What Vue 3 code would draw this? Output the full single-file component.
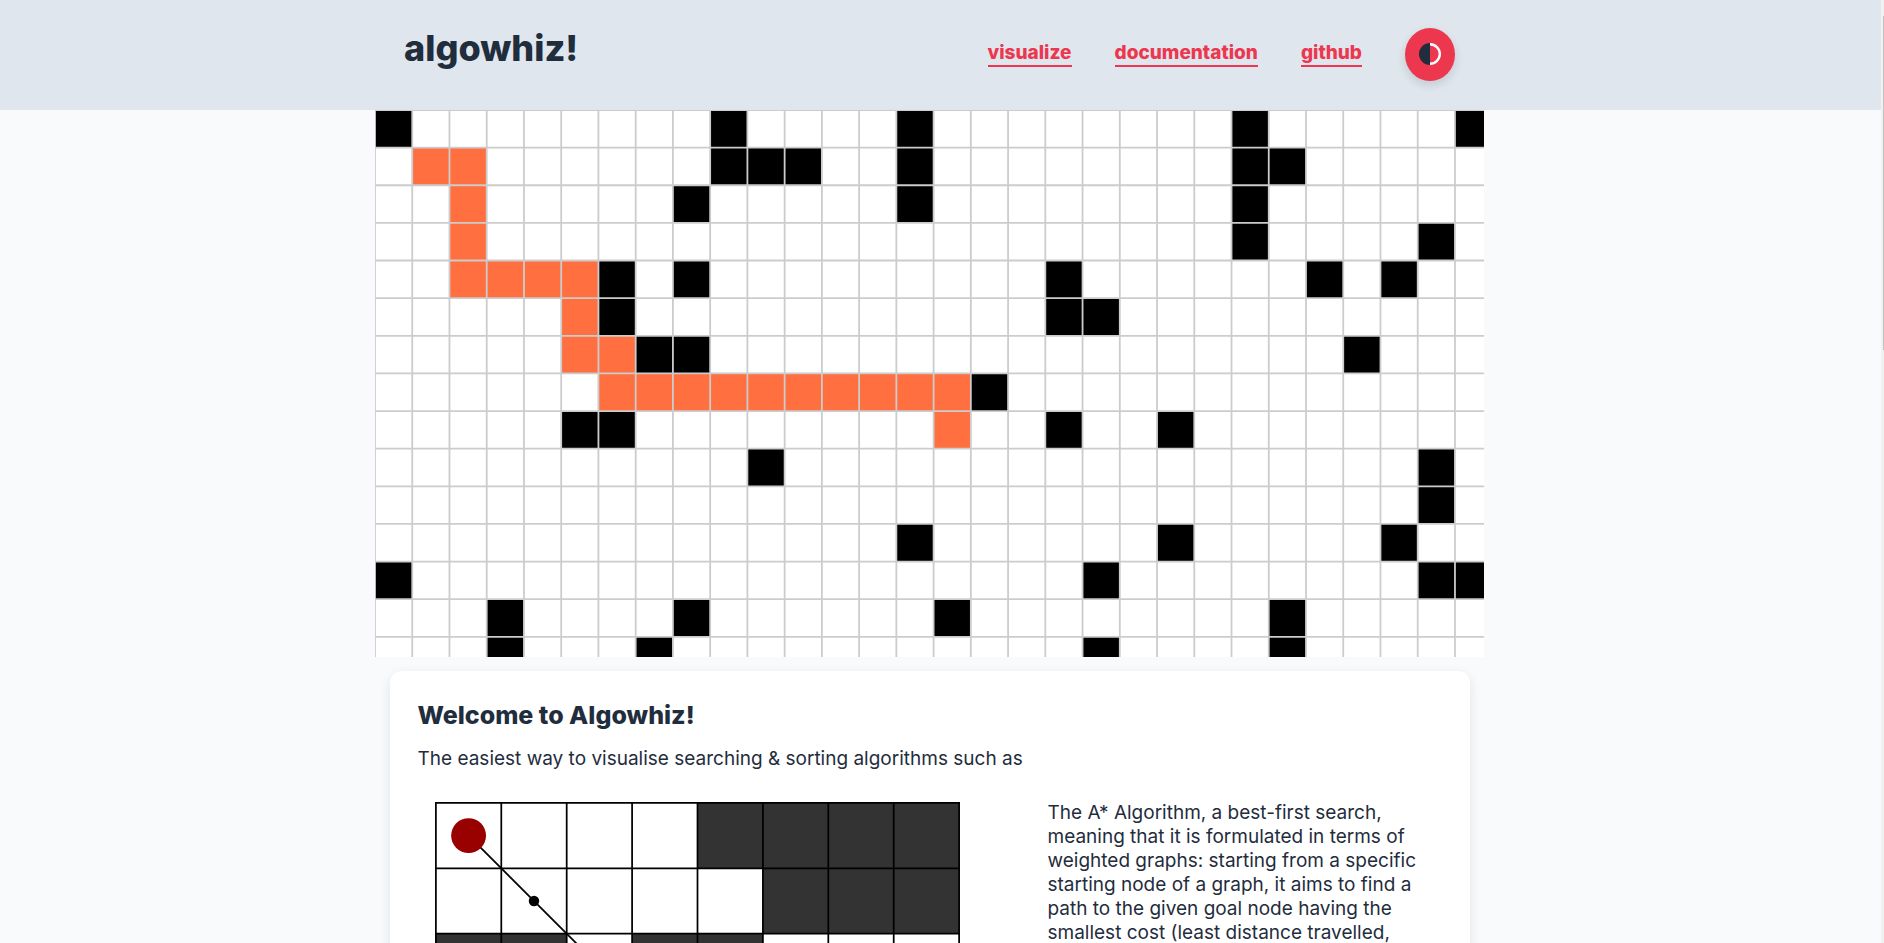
<script setup>
const COL = 37.24
const ROW = 37.63

const walls = [
  [0, 9, 14, 23, 29],
  [9, 10, 11, 14, 23, 24],
  [8, 14, 23],
  [23, 28],
  [6, 8, 18, 25, 27],
  [6, 18, 19],
  [7, 8, 26],
  [16],
  [5, 6, 18, 21],
  [10, 28],
  [28],
  [14, 21, 27],
  [0, 19, 28, 29],
  [3, 8, 15, 24],
  [3, 7, 19, 24],
]

const route = [
  [],
  [1, 2],
  [2],
  [2],
  [2, 3, 4, 5],
  [5],
  [5, 6],
  [6, 7, 8, 9, 10, 11, 12, 13, 14, 15],
  [15],
]

const toCells = (rows, kind) =>
  rows.flatMap((cols, r) =>
    cols.map((c) => ({ key: `${kind}-${r}-${c}`, kind, x: c * COL, y: r * ROW }))
  )

const cells = [...toCells(walls, 'wall'), ...toCells(route, 'route')]
const vertical = Array.from({ length: 30 }, (_, i) => i * COL)
const horizontal = Array.from({ length: 15 }, (_, i) => i * ROW)

const blocked = [
  [4, 5, 6, 7],
  [5, 6, 7],
  [0, 1, 3, 4],
].flatMap((cols, r) => cols.map((c) => ({ key: `${r}-${c}`, x: c * 75 + 1, y: r * 75 + 1 })))

const links = [
  { label: 'visualize', href: '#visualize' },
  { label: 'documentation', href: '#documentation' },
  { label: 'github', href: '#github' },
]
</script>

<template>
  <div class="shell">
    <div class="page">
      <header class="header">
        <div class="bar">
          <div class="logo">algowhiz!</div>
          <nav class="nav">
            <a v-for="link in links" :key="link.label" :href="link.href">{{ link.label }}</a>
            <button class="theme" type="button" aria-label="Toggle theme">
              <svg viewBox="0 0 22 22" width="22" height="22" aria-hidden="true">
                <path d="M11 0a11 11 0 0 0 0 22z" fill="#1f2d3d" />
                <path d="M11 1.2a9.8 9.8 0 0 1 0 19.6" fill="none" stroke="#fff" stroke-width="2.4" />
              </svg>
            </button>
          </nav>
        </div>
      </header>

      <main class="main">
        <svg class="board" viewBox="0 0 1109 547" role="img" aria-label="Pathfinding grid">
          <rect width="1109" height="547" fill="#fff" />
          <rect
            v-for="c in cells"
            :key="c.key"
            :class="c.kind"
            :x="c.x"
            :y="c.y"
            :width="COL"
            :height="ROW"
          />
          <g class="rules">
            <line v-for="x in vertical" :key="'v' + x" :x1="x" :x2="x" y1="0" y2="547" />
            <line v-for="y in horizontal" :key="'h' + y" :y1="y" :y2="y" x1="0" x2="1109" />
          </g>
        </svg>

        <section class="card">
          <h1>Welcome to Algowhiz!</h1>
          <p class="lead">The easiest way to visualise searching &amp; sorting algorithms such as</p>
          <div class="feature">
            <svg class="diagram" viewBox="0 0 602 227" role="img" aria-label="A* search diagram">
              <rect width="602" height="227" fill="#fff" />
              <rect v-for="b in blocked" :key="b.key" :x="b.x" :y="b.y" width="75" height="75" fill="#333" />
              <g stroke="#000" stroke-width="2">
                <line v-for="n in 9" :key="'c' + n" :x1="(n - 1) * 75 + 1" :x2="(n - 1) * 75 + 1" y1="0" y2="227" />
                <line v-for="n in 4" :key="'r' + n" :y1="(n - 1) * 75 + 1" :y2="(n - 1) * 75 + 1" x1="0" x2="602" />
                <line x1="38.5" y1="38.5" x2="188.5" y2="188.5" />
              </g>
              <circle cx="38.5" cy="38.5" r="20" fill="#900" />
              <circle cx="113.5" cy="113.5" r="6" />
            </svg>
            <p class="about">
              The A* Algorithm, a best-first search, meaning that it is formulated in terms of
              weighted graphs: starting from a specific starting node of a graph, it aims to find a
              path to the given goal node having the smallest cost (least distance travelled,
            </p>
          </div>
        </section>
      </main>
    </div>
    <div class="scroll" aria-hidden="true"><div class="thumb"></div></div>
  </div>
</template>

<style>
body {
  background: #f8fafc;
}
</style>

<style scoped>
.shell {
  display: flex;
  height: 100vh;
  overflow: hidden;
  color: #1f2d3d;
  background: #f8fafc;
  font-family: Inter, "Liberation Sans", sans-serif;
  font-size: 19px;
  line-height: 24px;
}

.page {
  flex: 1;
  min-width: 0;
}

.header,
.main {
  padding-right: 22px;
}

.header {
  background: #dfe6ed;
}

.bar {
  box-sizing: border-box;
  max-width: 1109px;
  height: 110px;
  margin: 0 auto;
  padding: 0 29px 2px;
  display: flex;
  align-items: center;
  justify-content: space-between;
}

.logo {
  font-size: 36px;
  line-height: 44px;
  font-weight: 800;
  padding-bottom: 12px;
}

.nav {
  display: flex;
  align-items: center;
  gap: 43px;
}

.nav a {
  color: #ed374f;
  font-size: 19px;
  line-height: 24px;
  font-weight: 800;
  text-decoration: none;
  border-bottom: 2px solid #ed374f;
}

.theme {
  display: flex;
  align-items: center;
  justify-content: center;
  width: 50px;
  height: 53px;
  padding: 0;
  border: 0;
  border-radius: 50%;
  background: #ed374f;
  box-shadow: 0 4px 8px rgba(31, 45, 61, 0.15);
}

.board {
  display: block;
  width: 100%;
  max-width: 1109px;
  margin: 0 auto;
}

.wall {
  fill: #000;
}

.route {
  fill: #ff6f40;
}

.rules {
  stroke: #ccc;
  stroke-width: 1.8;
}

.card {
  box-sizing: border-box;
  max-width: 1080px;
  margin: 14px auto 0;
  padding: 28px;
  border-radius: 12px;
  background: #fff;
  box-shadow: 0 4px 12px rgba(31, 45, 61, 0.1);
}

h1 {
  margin: 0;
  font-size: 25px;
  line-height: 32px;
  font-weight: 800;
}

.lead {
  margin: 16px 0 30px;
}

.feature {
  display: grid;
  grid-template-columns: 525px 394px;
  justify-content: space-between;
  align-items: start;
  padding-left: 17px;
}

.diagram {
  display: block;
  width: 100%;
  margin-top: 1px;
}

.about {
  margin: 0;
}

.scroll {
  flex: none;
  width: 3px;
  padding-top: 16px;
  background: #f1f1f1;
}

.thumb {
  width: 1px;
  height: 334px;
  margin-left: auto;
  background: #c1c1c1;
}
</style>
